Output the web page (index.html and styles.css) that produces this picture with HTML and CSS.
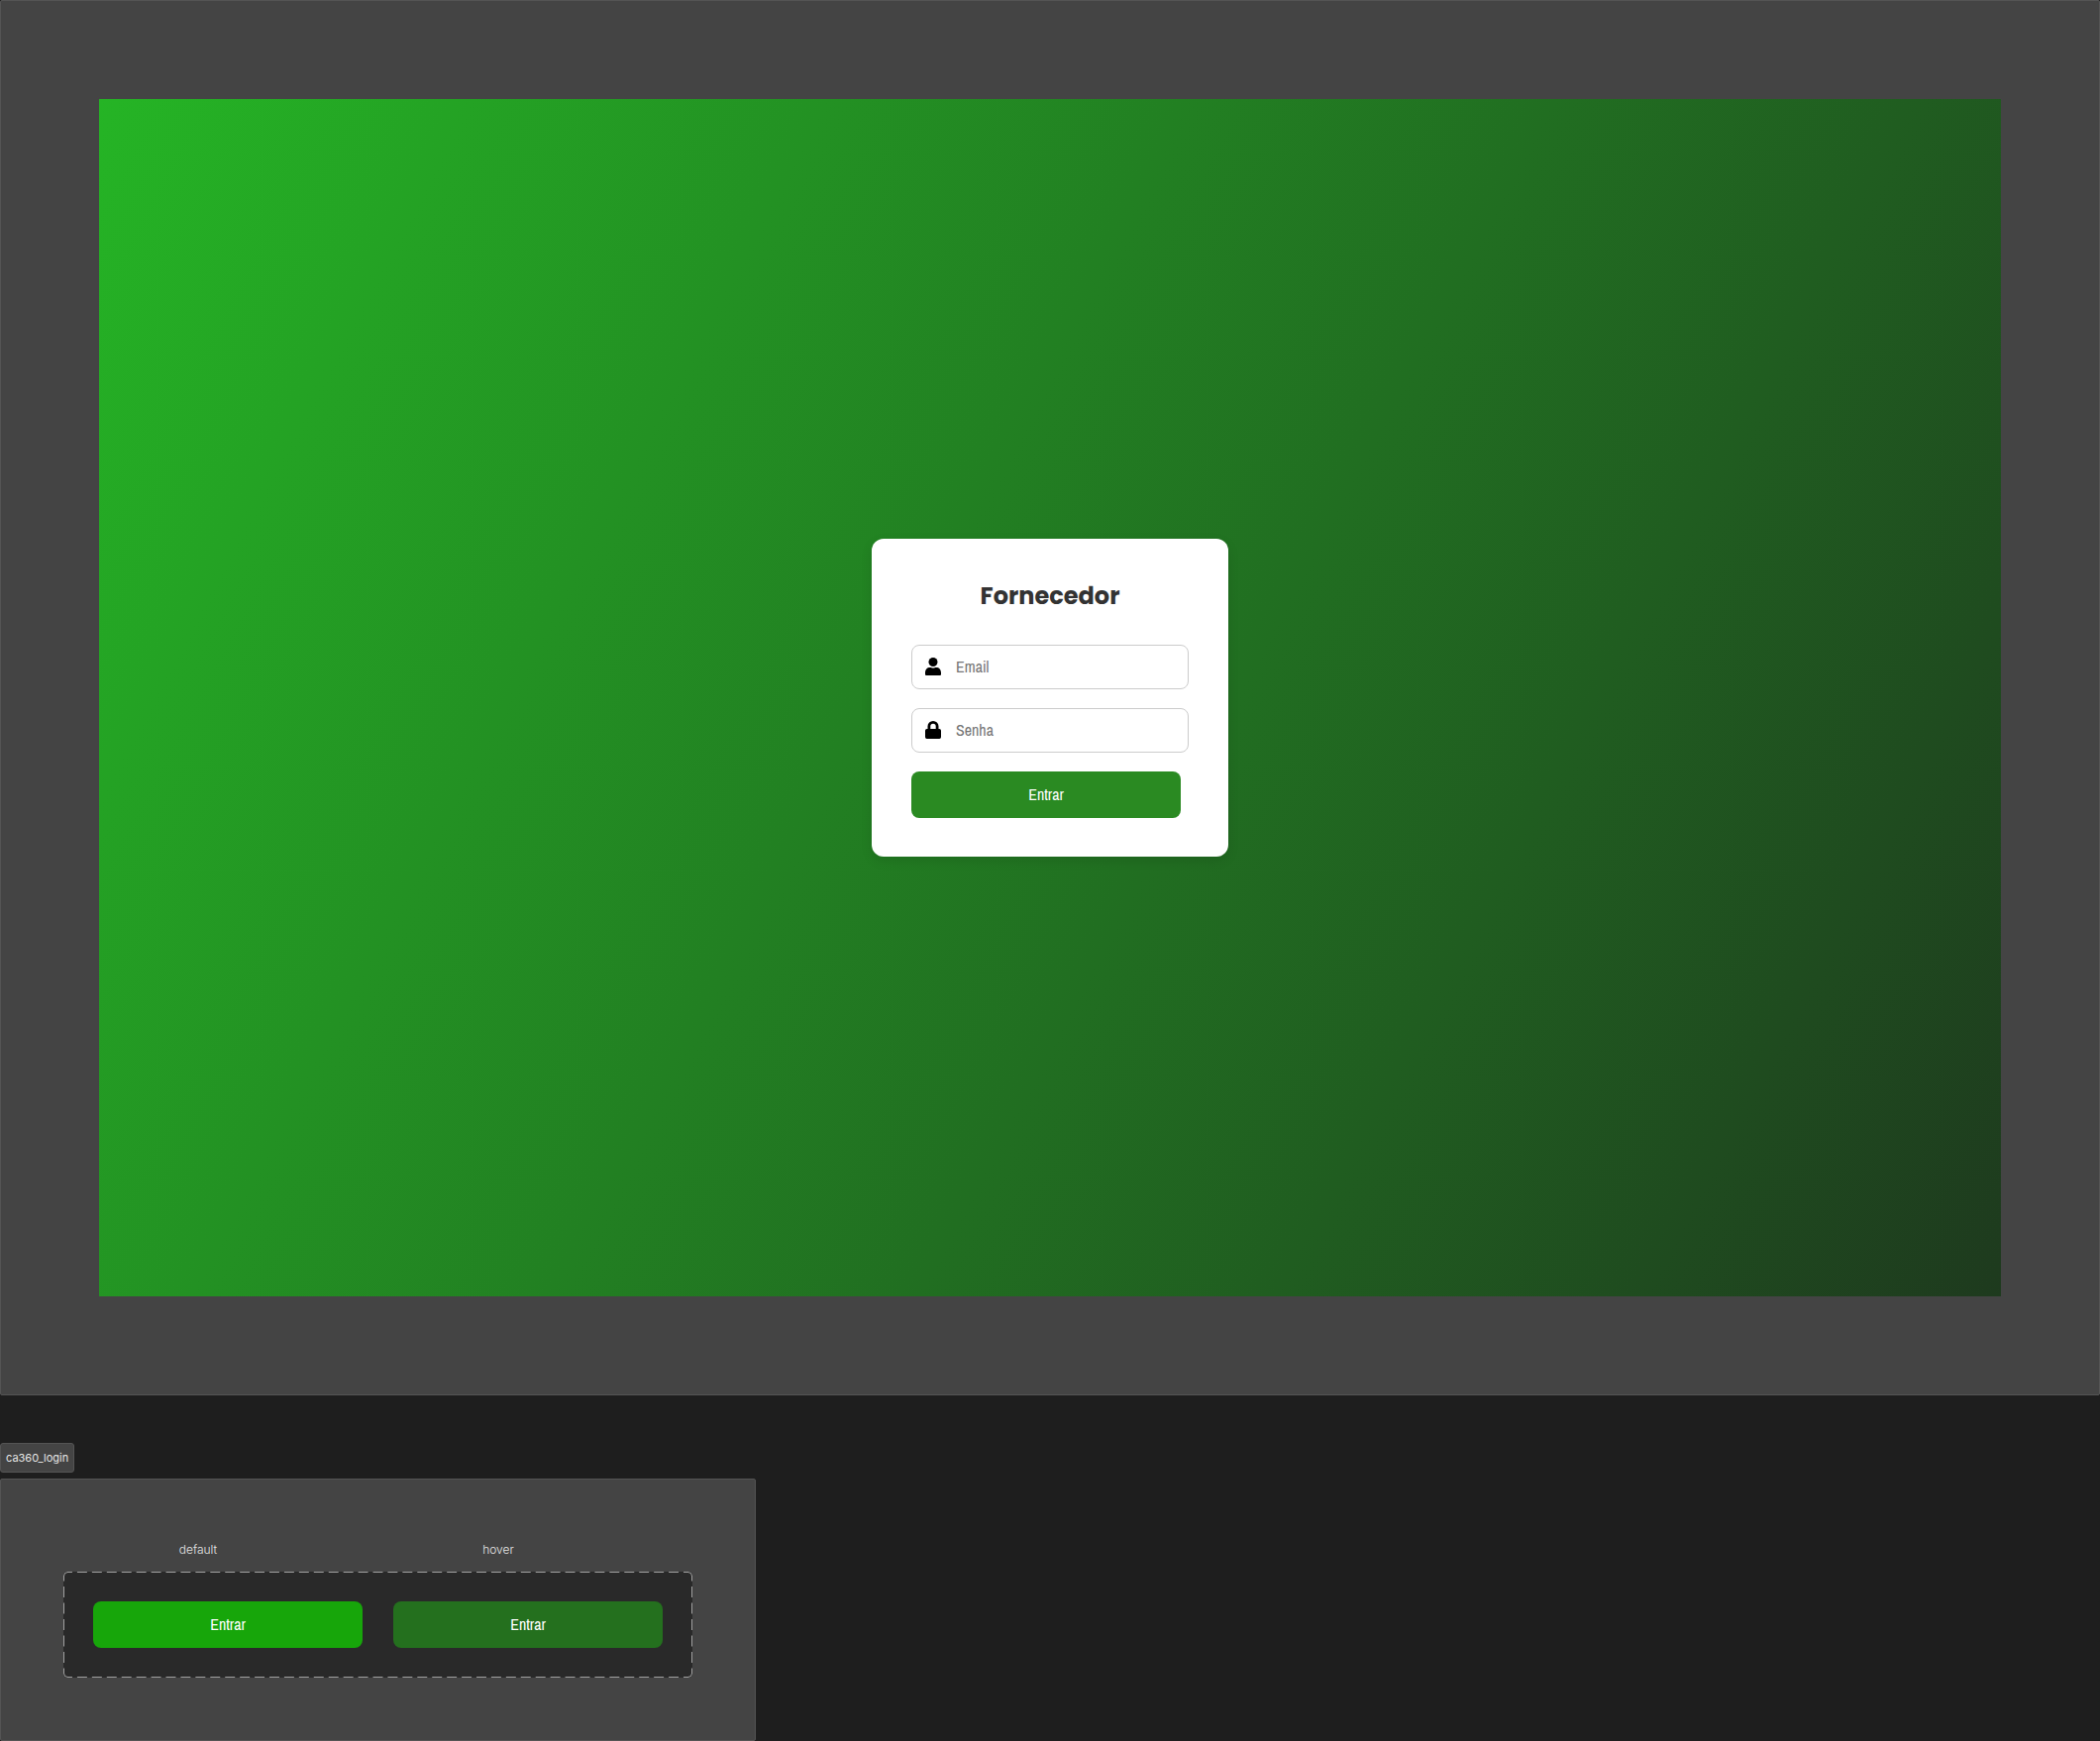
FILE: index.html
```
<!DOCTYPE html>
<html lang="pt-BR">
<head>
<meta charset="utf-8">
<meta name="viewport" content="width=device-width, initial-scale=1">
<title>ca360_login</title>
<link rel="stylesheet" href="styles.css">
</head>
<body>
<section class="section">
  <main class="screen">
    <form class="card">
      <h1 class="card-title">Fornecedor</h1>
      <label class="field">
        <svg class="field-icon" viewBox="0 0 16 18" aria-hidden="true"><circle cx="8" cy="4.5" r="4.5"/><path d="M0 15.5C0 12 1.800 10 5 10C6.200 10 6.600 10.600 8 10.600S9.800 10 11 10C14.200 10 16 12 16 15.500V17Q16 18 15 18H1Q0 18 0 17Z"/></svg>
        <input class="field-input" type="email" placeholder="Email" aria-label="Email">
      </label>
      <label class="field">
        <svg class="field-icon" viewBox="0 0 16 18" aria-hidden="true"><path fill-rule="evenodd" d="M2.500 8V5.300A5.500 5.300 0 0 1 13.500 5.300V8H14.300A1.700 1.700 0 0 1 16 9.700V16.300A1.700 1.700 0 0 1 14.300 18H1.700A1.700 1.700 0 0 1 0 16.300V9.700A1.700 1.700 0 0 1 1.700 8ZM5.300 8H10.700V5.300A2.700 2.600 0 0 0 5.300 5.300Z"/></svg>
        <input class="field-input" type="password" placeholder="Senha" aria-label="Senha">
      </label>
      <button class="btn" type="button">Entrar</button>
    </form>
  </main>
</section>

<p class="tag">ca360_login</p>

<section class="section section-variants">
  <div class="variant-names">
    <span>default</span>
    <span>hover</span>
  </div>
  <div class="variants">
    <svg class="outline" viewBox="0 0 635 107" aria-hidden="true">
      <path d="M.5 5V4.500A4 4 0 0 1 4.500 .5M630.500 .5A4 4 0 0 1 634.500 4.500M634.500 102.500A4 4 0 0 1 630.500 106.500M4.500 106.500A4 4 0 0 1 .5 102.500"/>
      <path class="dash" pathLength="630" d="M4 .5H631"/>
      <path class="dash" pathLength="630" d="M4 106.500H631"/>
      <path class="dash" pathLength="90" d="M.5 4V103"/>
      <path class="dash" pathLength="90" d="M634.500 4V103"/>
    </svg>
    <button class="btn btn-default" type="button">Entrar</button>
    <button class="btn btn-hover" type="button">Entrar</button>
  </div>
</section>
</body>
</html>
```
FILE: styles.css
```
* {
  box-sizing: border-box;
}

body {
  margin: 0;
  background: #1e1e1e;
  color: #e6e6e6;
  font-family: Inter, sans-serif;
}

.section {
  padding: 99px;
  border: 1px solid #545454;
  border-radius: 2px;
  background: #444;
}

.screen {
  display: flex;
  align-items: center;
  justify-content: center;
  min-height: 1209px;
  background: linear-gradient(118deg, #25b425, #1e3a1e);
}

/* Login card */
.card {
  width: 360px;
  padding: 40px 40px 39px;
  border-radius: 12px;
  background: #fff;
  box-shadow: 0 4px 12px rgba(0, 0, 0, 0.1);
}

.card-title {
  margin: 0 0 31px;
  color: #333;
  font-family: Poppins, Inter, sans-serif;
  font-size: 24px;
  font-weight: 700;
  line-height: 36px;
  text-align: center;
}

.field {
  display: flex;
  align-items: center;
  gap: 15px;
  height: 45px;
  margin-bottom: 19px;
  padding: 0 13px 1px;
  border: 1px solid #ccc;
  border-radius: 8px;
}

.field-icon {
  flex: none;
  width: 16px;
  height: 18px;
}

.field-input {
  flex: 1;
  min-width: 0;
  padding: 0;
  border: 0;
  outline: 0;
  background: none;
  font: 16px/20px "Archivo Narrow", "Liberation Sans", sans-serif;
}

.field-input::placeholder {
  color: #757575;
}

.btn {
  display: block;
  width: 272px;
  height: 47px;
  padding: 0 0 2px;
  border: 0;
  border-radius: 8px;
  background: #2a8a22;
  color: #fff;
  font: 16px/20px "Archivo Narrow", "Liberation Sans", sans-serif;
}

.btn-default {
  background: #17a60a;
}

.btn-hover {
  background: #24701e;
}

/* Component variants */
.tag {
  width: fit-content;
  margin: 48px 0 6px;
  padding: 0 5px;
  border: 1px solid #545454;
  border-radius: 3px;
  background: #444;
  font-size: 11px;
  line-height: 28px;
}

.section-variants {
  width: fit-content;
  padding: 63px;
}

.variant-names {
  display: grid;
  grid-template-columns: 272px 272px;
  gap: 31px;
  margin-bottom: 14px;
  font-size: 12px;
  font-weight: 300;
  line-height: 16px;
  text-align: center;
}

.variants {
  position: relative;
  display: flex;
  gap: 31px;
  padding: 30px;
  border-radius: 4px;
  background: #292929;
}

.outline {
  position: absolute;
  inset: 0;
  width: 100%;
  height: 100%;
  fill: none;
  stroke: #a0a0a0;
}

.dash {
  stroke-dasharray: 10 5;
  stroke-dashoffset: 5;
}
```
